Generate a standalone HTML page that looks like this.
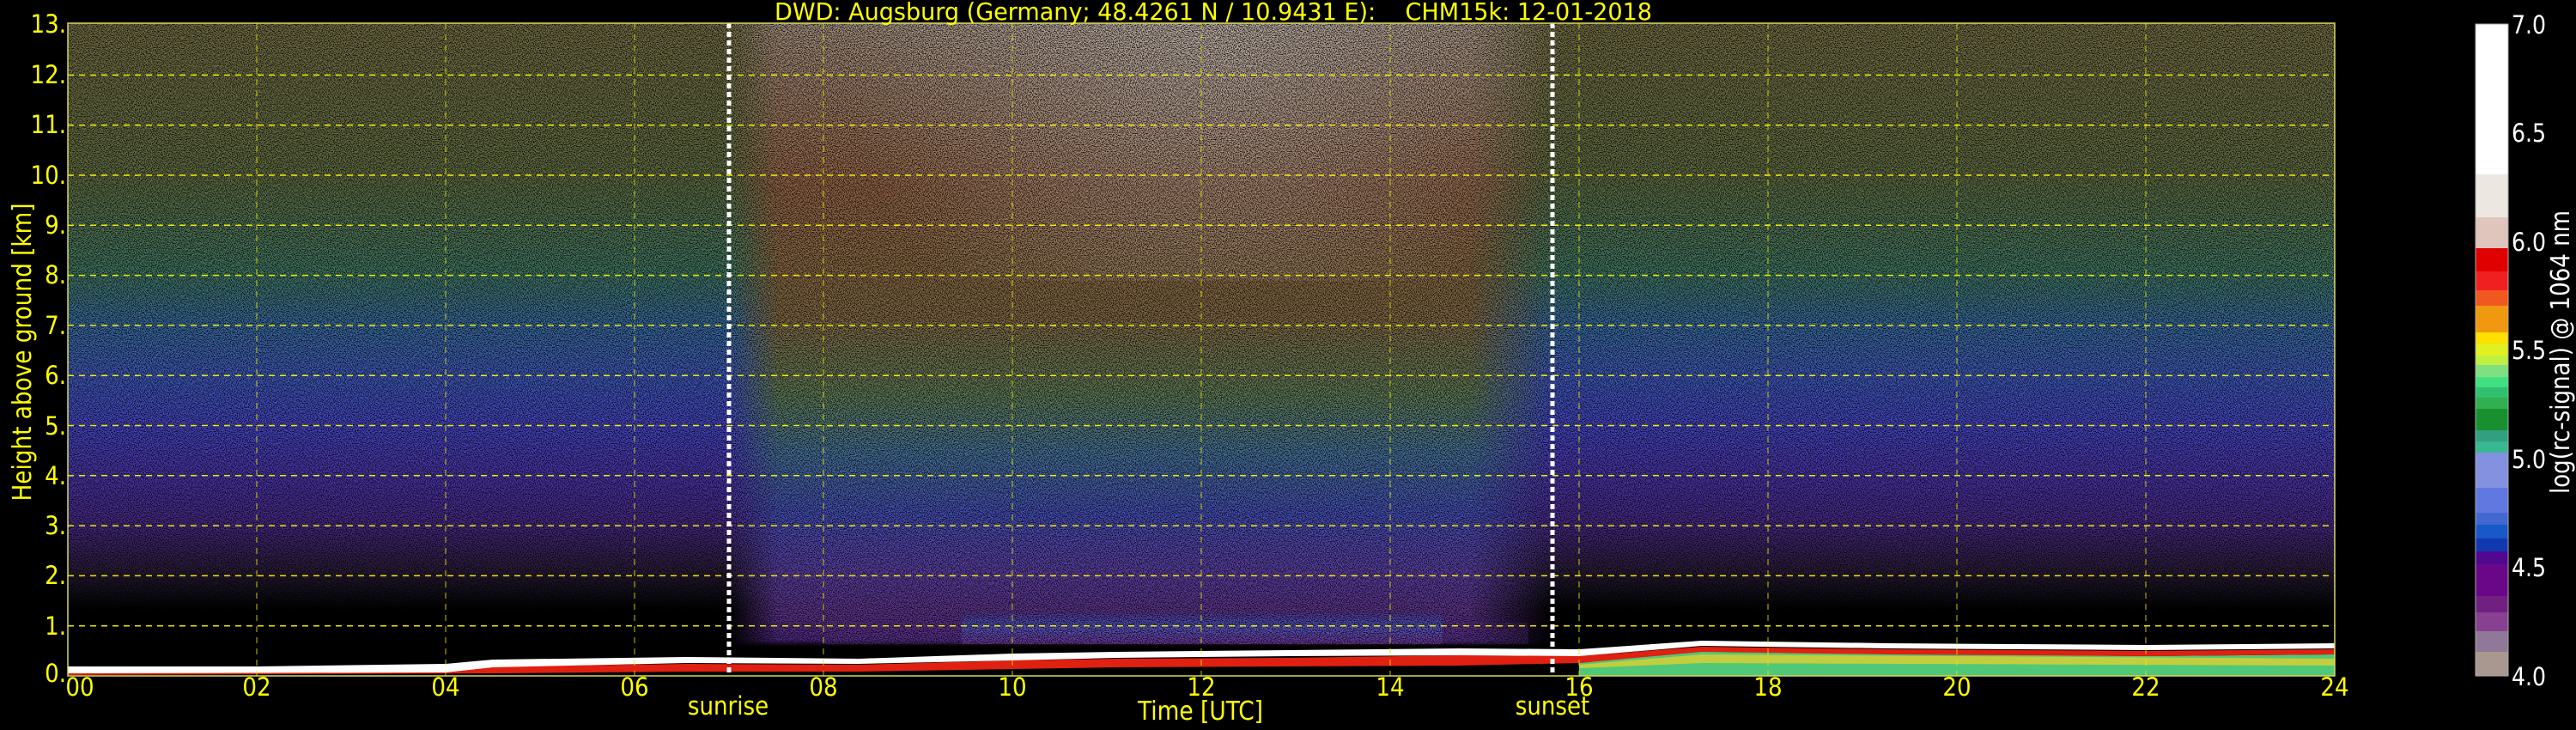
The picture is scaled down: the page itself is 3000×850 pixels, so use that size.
<!DOCTYPE html>
<html><head><meta charset="utf-8"><style>
html,body{margin:0;padding:0;background:#000;width:3000px;height:850px;overflow:hidden}
svg{display:block}
text{font-family:"DejaVu Sans Condensed","DejaVu Sans","Liberation Sans",sans-serif}
</style></head><body>
<svg width="3000" height="850" viewBox="0 0 3000 850" xmlns="http://www.w3.org/2000/svg">
<defs>
<linearGradient id="base" x1="0" y1="27" x2="0" y2="787" gradientUnits="userSpaceOnUse">
<stop offset="0" stop-color="#7a7448"/>
<stop offset="0.23" stop-color="#687446"/>
<stop offset="0.38" stop-color="#468068"/>
<stop offset="0.46" stop-color="#3c72a8"/>
<stop offset="0.54" stop-color="#4460c8"/>
<stop offset="0.62" stop-color="#4a4ad0"/>
<stop offset="0.70" stop-color="#5038b4"/>
<stop offset="0.77" stop-color="#4c2c8e"/>
<stop offset="0.84" stop-color="#2c1e3c"/>
<stop offset="0.88" stop-color="#0e0c14"/>
<stop offset="0.9" stop-color="#000"/>
<stop offset="1" stop-color="#000"/>
</linearGradient>
<linearGradient id="mid" x1="0" y1="27" x2="0" y2="787" gradientUnits="userSpaceOnUse">
<stop offset="0" stop-color="#b8a090"/>
<stop offset="0.25" stop-color="#a66c4c"/>
<stop offset="0.45" stop-color="#947040"/>
<stop offset="0.57" stop-color="#6a8a50"/>
<stop offset="0.66" stop-color="#4a80a0"/>
<stop offset="0.75" stop-color="#4a5ac8"/>
<stop offset="0.84" stop-color="#6a4ac0"/>
<stop offset="0.9" stop-color="#7040a8"/>
<stop offset="0.945" stop-color="#6030a0"/>
<stop offset="0.955" stop-color="#000"/>
<stop offset="1" stop-color="#000"/>
</linearGradient>
<linearGradient id="hfade" x1="849" y1="0" x2="1808" y2="0" gradientUnits="userSpaceOnUse">
<stop offset="0" stop-color="#fff" stop-opacity="0"/>
<stop offset="0.06" stop-color="#fff" stop-opacity="0.9"/>
<stop offset="0.9" stop-color="#fff" stop-opacity="0.9"/>
<stop offset="1" stop-color="#fff" stop-opacity="0"/>
</linearGradient>
<mask id="mmask"><rect x="79" y="27" width="2640" height="760" fill="url(#hfade)"/></mask>
<radialGradient id="whitetop" cx="1400" cy="40" r="420" gradientUnits="userSpaceOnUse">
<stop offset="0" stop-color="#e0d8d4" stop-opacity="0.55"/>
<stop offset="1" stop-color="#e0d8d4" stop-opacity="0"/>
</radialGradient>
<linearGradient id="blueband" x1="0" y1="712" x2="0" y2="750" gradientUnits="userSpaceOnUse">
<stop offset="0" stop-color="#4060e0" stop-opacity="0"/>
<stop offset="0.5" stop-color="#5078f8" stop-opacity="0.85"/>
<stop offset="1" stop-color="#8040b0" stop-opacity="0.7"/>
</linearGradient>
<filter id="speck" x="79" y="27" width="2640" height="760" filterUnits="userSpaceOnUse">
<feTurbulence type="fractalNoise" baseFrequency="0.85" numOctaves="1" seed="7"/>
<feColorMatrix type="matrix" values="0 0 0 0 0  0 0 0 0 0  0 0 0 0 0  -3 0 0 0 1.85"/>
</filter>
</defs>

<rect x="79" y="27" width="2640" height="760" fill="url(#base)"/>
<rect x="79" y="27" width="2640" height="760" fill="url(#mid)" mask="url(#mmask)"/>
<rect x="900" y="27" width="1000" height="300" fill="url(#whitetop)"/>
<rect x="1120" y="712" width="560" height="38" fill="url(#blueband)"/>
<rect x="960" y="725" width="820" height="25" fill="#7040a0" opacity="0.35"/>
<rect x="79" y="27" width="2640" height="760" fill="#000" filter="url(#speck)"/>

<!-- ground layer -->
<polygon fill="#50c878" points="1839,772 1900,766 1982,758 2100,760 2300,762 2500,764 2719,762 2719,787 1839,787"/>
<polygon fill="#e0d030" opacity="0.8" points="1839,774 1982,762 2719,767 2719,775 1982,772 1839,778"/>
<polygon fill="#e02010" points="79,783 519,781 574,776 800,773 1000,774 1179,769 1300,767 1500,766 1700,763 1839,764 1982,753 2200,756 2500,758 2719,756 2719,762 2500,764 2200,762 1982,759 1839,772 1700,775 1500,776 1300,777 1179,779 1000,782 800,782 574,784 79,786"/>
<polygon fill="#fff" points="79,776 300,776 519,773 574,768 800,765 1000,767 1179,761 1300,759 1500,757 1700,755 1839,756 1982,746 2200,749 2500,751 2719,749 2719,755 2500,757 2200,755 1982,752 1839,764 1700,763 1500,764 1300,766 1179,769 1000,773 800,772 574,777 519,783 79,784"/>

<!-- grid -->
<g stroke="#ffff00" stroke-width="1.5" stroke-dasharray="7,6" fill="none" opacity="0.9">
<line x1="79" y1="728.7" x2="2719" y2="728.7"/>
<line x1="79" y1="670.4" x2="2719" y2="670.4"/>
<line x1="79" y1="612.1" x2="2719" y2="612.1"/>
<line x1="79" y1="553.8" x2="2719" y2="553.8"/>
<line x1="79" y1="495.5" x2="2719" y2="495.5"/>
<line x1="79" y1="437.2" x2="2719" y2="437.2"/>
<line x1="79" y1="378.9" x2="2719" y2="378.9"/>
<line x1="79" y1="320.6" x2="2719" y2="320.6"/>
<line x1="79" y1="262.3" x2="2719" y2="262.3"/>
<line x1="79" y1="204" x2="2719" y2="204"/>
<line x1="79" y1="145.7" x2="2719" y2="145.7"/>
<line x1="79" y1="87.4" x2="2719" y2="87.4"/>
</g>
<g stroke="#e8e800" stroke-width="1" stroke-dasharray="7,6" fill="none" opacity="0.85">
<line x1="299" y1="27" x2="299" y2="787"/>
<line x1="519" y1="27" x2="519" y2="787"/>
<line x1="739" y1="27" x2="739" y2="787"/>
<line x1="959" y1="27" x2="959" y2="787"/>
<line x1="1179" y1="27" x2="1179" y2="787"/>
<line x1="1399" y1="27" x2="1399" y2="787"/>
<line x1="1619" y1="27" x2="1619" y2="787"/>
<line x1="1839" y1="27" x2="1839" y2="787"/>
<line x1="2059" y1="27" x2="2059" y2="787"/>
<line x1="2279" y1="27" x2="2279" y2="787"/>
<line x1="2499" y1="27" x2="2499" y2="787"/>
</g>
<g stroke="#fff" stroke-width="5" stroke-dasharray="6,4">
<line x1="849" y1="27" x2="849" y2="787"/>
<line x1="1808" y1="27" x2="1808" y2="787"/>
</g>
<rect x="79" y="27" width="2640" height="760" fill="none" stroke="#d8d860" stroke-width="1.5"/>

<text x="902" y="23" font-size="28" fill="#ffff00" xml:space="preserve" textLength="1022" lengthAdjust="spacingAndGlyphs">DWD: Augsburg (Germany; 48.4261 N / 10.9431 E):&#160;&#160;&#160;&#160;CHM15k: 12-01-2018</text>

<g font-size="29" fill="#ffff00" text-anchor="end">
<text x="77" y="38">13.</text>
<text x="77" y="97">12.</text>
<text x="77" y="155">11.</text>
<text x="77" y="214">10.</text>
<text x="77" y="272">9.</text>
<text x="77" y="330">8.</text>
<text x="77" y="389">7.</text>
<text x="77" y="447">6.</text>
<text x="77" y="506">5.</text>
<text x="77" y="564">4.</text>
<text x="77" y="622">3.</text>
<text x="77" y="680">2.</text>
<text x="77" y="739">1.</text>
<text x="77" y="794">0.</text>
</g>
<text transform="translate(36,410) rotate(-90)" font-size="30" fill="#ffff00" text-anchor="middle" textLength="347" lengthAdjust="spacingAndGlyphs">Height above ground [km]</text>

<g font-size="29" fill="#ffff00" text-anchor="middle">
<text x="93" y="810">00</text>
<text x="299" y="810">02</text>
<text x="519" y="810">04</text>
<text x="739" y="810">06</text>
<text x="959" y="810">08</text>
<text x="1179" y="810">10</text>
<text x="1399" y="810">12</text>
<text x="1619" y="810">14</text>
<text x="1839" y="810">16</text>
<text x="2059" y="810">18</text>
<text x="2279" y="810">20</text>
<text x="2499" y="810">22</text>
<text x="2719" y="810">24</text>
</g>
<text x="848" y="832" font-size="29" fill="#ffff00" text-anchor="middle">sunrise</text>
<text x="1808" y="832" font-size="29" fill="#ffff00" text-anchor="middle">sunset</text>
<text x="1398" y="838" font-size="30" fill="#ffff00" text-anchor="middle" textLength="146" lengthAdjust="spacingAndGlyphs">Time [UTC]</text>

<g>
<rect x="2883" y="28" width="38" height="175" fill="#ffffff"/>
<rect x="2883" y="203" width="38" height="50" fill="#ede7e1"/>
<rect x="2883" y="253" width="38" height="36" fill="#e0c5bc"/>
<rect x="2883" y="289" width="38" height="27" fill="#e00000"/>
<rect x="2883" y="316" width="38" height="22" fill="#f02020"/>
<rect x="2883" y="338" width="38" height="18" fill="#f05820"/>
<rect x="2883" y="356" width="38" height="31" fill="#f09810"/>
<rect x="2883" y="387" width="38" height="13" fill="#ffe000"/>
<rect x="2883" y="400" width="38" height="14" fill="#e0f020"/>
<rect x="2883" y="414" width="38" height="11" fill="#c0f040"/>
<rect x="2883" y="425" width="38" height="14" fill="#80e080"/>
<rect x="2883" y="439" width="38" height="12" fill="#40e080"/>
<rect x="2883" y="451" width="38" height="12" fill="#30c070"/>
<rect x="2883" y="463" width="38" height="13" fill="#30b050"/>
<rect x="2883" y="476" width="38" height="25" fill="#189030"/>
<rect x="2883" y="501" width="38" height="13" fill="#30a080"/>
<rect x="2883" y="514" width="38" height="13" fill="#38b890"/>
<rect x="2883" y="527" width="38" height="41" fill="#8490e0"/>
<rect x="2883" y="568" width="38" height="29" fill="#6078e0"/>
<rect x="2883" y="597" width="38" height="14" fill="#4068d0"/>
<rect x="2883" y="611" width="38" height="16" fill="#1858c8"/>
<rect x="2883" y="627" width="38" height="15" fill="#1038b0"/>
<rect x="2883" y="642" width="38" height="15" fill="#500890"/>
<rect x="2883" y="657" width="38" height="37" fill="#680888"/>
<rect x="2883" y="694" width="38" height="19" fill="#702080"/>
<rect x="2883" y="713" width="38" height="22" fill="#884090"/>
<rect x="2883" y="735" width="38" height="24" fill="#907898"/>
<rect x="2883" y="759" width="38" height="28" fill="#a89890"/>
<rect x="2883" y="28" width="38" height="759" fill="none" stroke="#aaa" stroke-width="1"/>
</g>
<g font-size="29" fill="#fff" font-family="DejaVu Sans, sans-serif">
<text x="2925" y="39" textLength="40" lengthAdjust="spacingAndGlyphs">7.0</text>
<text x="2925" y="165" textLength="40" lengthAdjust="spacingAndGlyphs">6.5</text>
<text x="2925" y="292" textLength="40" lengthAdjust="spacingAndGlyphs">6.0</text>
<text x="2925" y="418" textLength="40" lengthAdjust="spacingAndGlyphs">5.5</text>
<text x="2925" y="545" textLength="40" lengthAdjust="spacingAndGlyphs">5.0</text>
<text x="2925" y="671" textLength="40" lengthAdjust="spacingAndGlyphs">4.5</text>
<text x="2925" y="798" textLength="40" lengthAdjust="spacingAndGlyphs">4.0</text>
</g>
<text transform="translate(2992,410) rotate(-90)" font-size="30" fill="#fff" text-anchor="middle" textLength="330" lengthAdjust="spacingAndGlyphs">log(rc-signal) @ 1064 nm</text>
</svg>
</body></html>
